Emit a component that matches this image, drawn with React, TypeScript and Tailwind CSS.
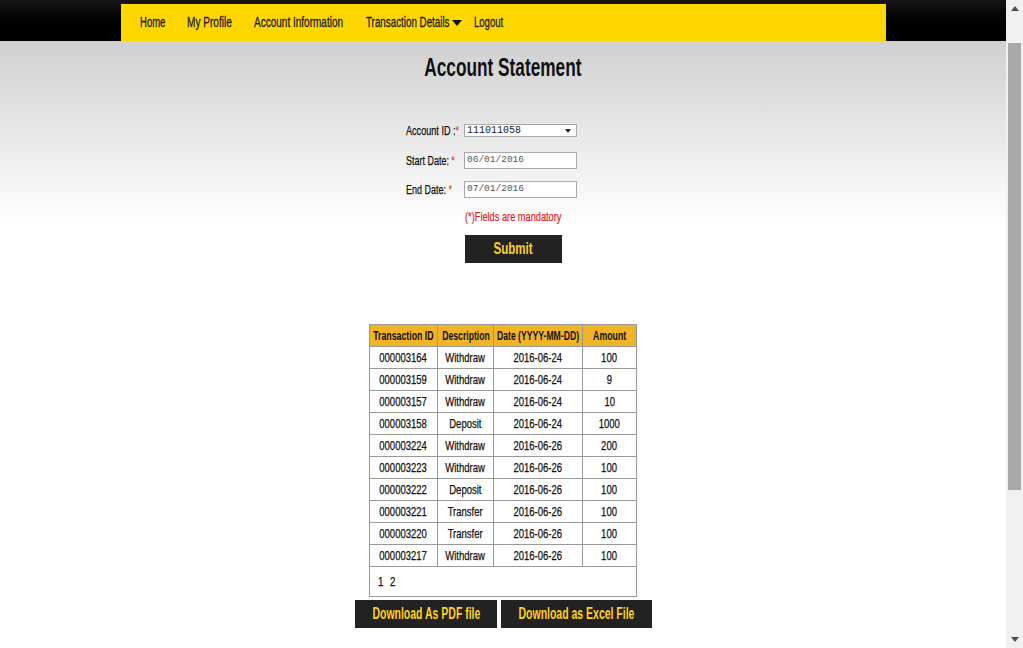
import React from "react";

const F = { fontFamily: '"Liberation Sans", Arial, sans-serif' };
const MONO = { fontFamily: '"Liberation Mono", "Courier New", monospace' };

const rows = [
  ["000003164", "Withdraw", "2016-06-24", "100"],
  ["000003159", "Withdraw", "2016-06-24", "9"],
  ["000003157", "Withdraw", "2016-06-24", "10"],
  ["000003158", "Deposit", "2016-06-24", "1000"],
  ["000003224", "Withdraw", "2016-06-26", "200"],
  ["000003223", "Withdraw", "2016-06-26", "100"],
  ["000003222", "Deposit", "2016-06-26", "100"],
  ["000003221", "Transfer", "2016-06-26", "100"],
  ["000003220", "Transfer", "2016-06-26", "100"],
  ["000003217", "Withdraw", "2016-06-26", "100"],
];

function S({ c, children }: { c: string; children: React.ReactNode }) {
  return <span className={`inline-block shrink-0 whitespace-nowrap ${c}`}>{children}</span>;
}

function Center({ c, children }: { c: string; children: React.ReactNode }) {
  return (
    <div className="flex justify-center">
      <S c={c}>{children}</S>
    </div>
  );
}

const colW = ["w-[68px]", "w-[56px]", "w-[89px]", "w-[54px]"];

export default function App() {
  return (
    <div className="flex h-[648px] w-[1023px] overflow-hidden whitespace-nowrap bg-white text-[#111]" style={F}>
      <div className="flex w-[1006px] flex-col">
        <div className="h-[41px] bg-gradient-to-b from-[#161616] to-[#000] pt-[4px]">
          <nav className="mx-auto flex h-[37px] w-[765px] items-center bg-[#ffd700] pl-[19px] text-[14px] text-[#1c1c1c] [-webkit-text-stroke:0.3px_#1c1c1c]">
            <div className="w-[47px]"><S c="origin-left scale-x-[0.68]">Home</S></div>
            <div className="w-[67px]"><S c="origin-left scale-x-[0.72]">My Profile</S></div>
            <div className="w-[112px]"><S c="origin-left scale-x-[0.715]">Account Information</S></div>
            <div className="w-[86px]"><S c="origin-left scale-x-[0.7]">Transaction Details</S></div>
            <div className="flex w-[22px] items-center">
              <svg width="10" height="6" viewBox="0 0 10 6" className="mt-[1px]">
                <path d="M0 0h10L5 6z" fill="#111" />
              </svg>
            </div>
            <div className="w-[40px]"><S c="origin-left scale-x-[0.68]">Logout</S></div>
          </nav>
        </div>
        <div className="flex-1 bg-gradient-to-b from-[#d0d0d0] from-0% to-white to-[30%]">
          <h1 className="mt-[11px] flex justify-center text-[25px] font-bold leading-[30px] text-[#111]">
            <S c="scale-x-[0.69]">Account Statement</S>
          </h1>
          <div className="mt-[41px] pl-[406px] text-[13px] text-[#111]">
            <div className="flex h-[15px] items-center [-webkit-text-stroke:0.25px_#111]">
              <div className="w-[58px]">
                <S c="origin-left scale-x-[0.7]">Account ID :<span className="text-[#e02020] [-webkit-text-stroke:0]">*</span></S>
              </div>
              <div className="flex h-[13px] w-[113px] items-center justify-between border border-[#a9a9a9] bg-white pl-[2px] pr-[5px] text-[10px] text-[#222] [-webkit-text-stroke:0]" style={MONO}>
                <span>111011058</span>
                <svg width="6" height="4" viewBox="0 0 6 4"><path d="M0 0h6L3 4z" fill="#222" /></svg>
              </div>
            </div>
            <div className="mt-[14px] flex h-[17px] items-center [-webkit-text-stroke:0.25px_#111]">
              <div className="w-[58px]">
                <S c="origin-left scale-x-[0.69]">Start Date: <span className="text-[#e02020] [-webkit-text-stroke:0]">*</span></S>
              </div>
              <div className="flex h-[17px] w-[113px] items-center border border-[#a9a9a9] bg-white pl-[2px] text-[9.5px] text-[#555] [-webkit-text-stroke:0]" style={MONO}>
                06/01/2016
              </div>
            </div>
            <div className="mt-[12px] flex h-[17px] items-center [-webkit-text-stroke:0.25px_#111]">
              <div className="w-[58px]">
                <S c="origin-left scale-x-[0.69]">End Date: <span className="text-[#e02020] [-webkit-text-stroke:0]">*</span></S>
              </div>
              <div className="flex h-[17px] w-[113px] items-center border border-[#a9a9a9] bg-white pl-[2px] text-[9.5px] text-[#555] [-webkit-text-stroke:0]" style={MONO}>
                07/01/2016
              </div>
            </div>
            <div className="mt-[11px] pl-[59px] text-[13px] leading-[16px] text-[#e02020] [-webkit-text-stroke:0.2px_#e02020]">
              <S c="origin-left scale-x-[0.71]">(*)Fields are mandatory</S>
            </div>
            <div className="mt-[10px] ml-[59px] flex h-[28px] w-[97px] items-center justify-center bg-[#222] text-[16px] font-bold text-[#ffd21f]">
              <S c="scale-x-[0.72]">Submit</S>
            </div>
          </div>
          <div className="mt-[61px] flex flex-col items-center">
            <table className="w-[268px] table-fixed border-collapse text-[12px] text-[#111]">
              <thead>
                <tr className="h-[22px] bg-[#f2b427] font-bold">
                  <th className={`${colW[0]} border border-[#999] p-0 font-bold`}><Center c="scale-x-[0.73]">Transaction ID</Center></th>
                  <th className={`${colW[1]} border border-[#999] p-0 font-bold`}><Center c="scale-x-[0.72]">Description</Center></th>
                  <th className={`${colW[2]} border border-[#999] p-0 font-bold`}><Center c="scale-x-[0.72]">Date (YYYY-MM-DD)</Center></th>
                  <th className={`${colW[3]} border border-[#999] p-0 font-bold`}><Center c="scale-x-[0.73]">Amount</Center></th>
                </tr>
              </thead>
              <tbody className="[-webkit-text-stroke:0.25px_#111]">
                {rows.map((r) => (
                  <tr key={r[0]} className="h-[22px] bg-white">
                    {r.map((c, i) => (
                      <td key={i} className="border border-[#999] p-0">
                        <Center c="scale-x-[0.79]">{c}</Center>
                      </td>
                    ))}
                  </tr>
                ))}
                <tr className="h-[30px] bg-white">
                  <td colSpan={4} className="border border-[#999] pl-[8px] text-[13px]">
                    <S c="origin-left scale-x-[0.75]">1 <span className="ml-[5px]">2</span></S>
                  </td>
                </tr>
              </tbody>
            </table>
            <div className="mt-[3px] flex gap-[4px] pl-[1px]">
              <div className="flex h-[28px] w-[142px] items-center justify-center bg-[#222] text-[16px] font-bold text-[#ffd21f]">
                <S c="scale-x-[0.655]">Download As PDF file</S>
              </div>
              <div className="flex h-[28px] w-[151px] items-center justify-center bg-[#222] text-[16px] font-bold text-[#ffd21f]">
                <S c="scale-x-[0.655]">Download as Excel File</S>
              </div>
            </div>
          </div>
        </div>
      </div>
      <div className="flex w-[17px] flex-col items-center bg-[#f1f1f1]">
        <div className="flex h-[17px] items-center justify-center">
          <svg width="8" height="5" viewBox="0 0 8 5"><path d="M0 5L4 0l4 5z" fill="#505050" /></svg>
        </div>
        <div className="mt-[26px] h-[447px] w-[13px] bg-[#a8a8a8]" />
        <div className="flex-1" />
        <div className="flex h-[17px] items-center justify-center">
          <svg width="8" height="5" viewBox="0 0 8 5"><path d="M0 0h8L4 5z" fill="#505050" /></svg>
        </div>
      </div>
    </div>
  );
}
